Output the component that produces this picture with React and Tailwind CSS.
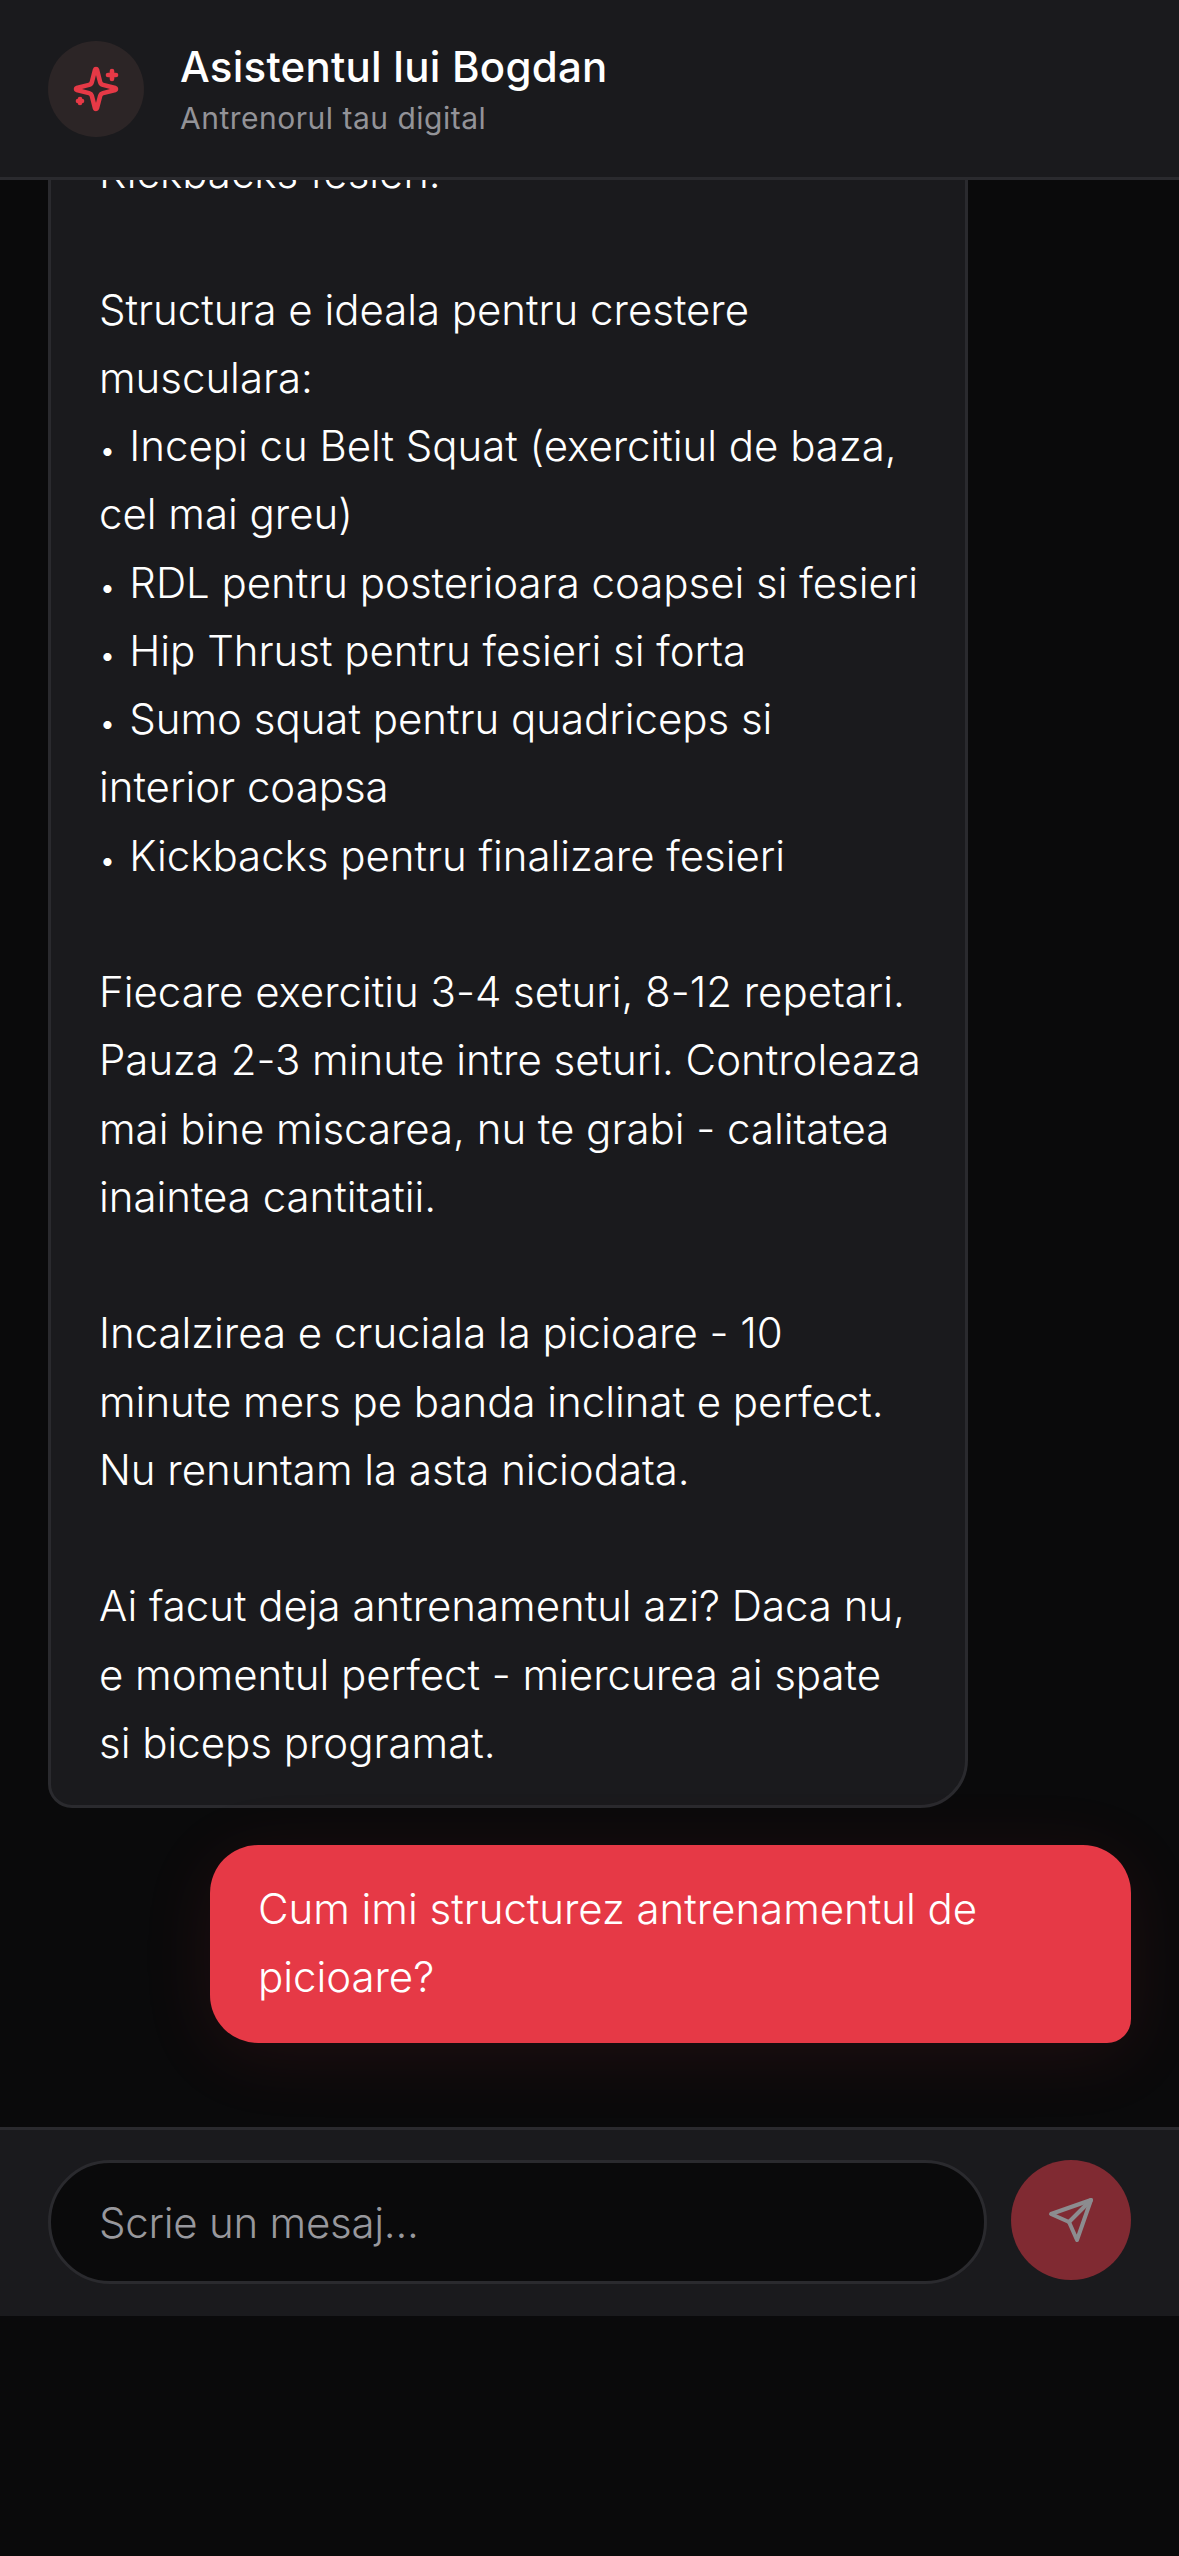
import React from "react";

const Bullet = () => <span className="mr-[5px] text-[30px] leading-none">• </span>;

function SparkleIcon() {
  return (
    <svg width="48" height="48" viewBox="0 0 24 24" fill="none" stroke="#e63946" strokeWidth="2.3" strokeLinecap="round" strokeLinejoin="round">
      <path d="M9.937 15.5A2 2 0 0 0 8.5 14.063l-6.135-1.582a.5.5 0 0 1 0-.962L8.5 9.936A2 2 0 0 0 9.937 8.5l1.582-6.135a.5.5 0 0 1 .963 0L14.063 8.5A2 2 0 0 0 15.5 9.937l6.135 1.581a.5.5 0 0 1 0 .964L15.5 14.063a2 2 0 0 0-1.437 1.437l-1.582 6.135a.5.5 0 0 1-.963 0z" />
      <path d="M20 3v4" />
      <path d="M22 5h-4" />
      <path d="M4 17v2" />
      <path d="M5 18H3" />
    </svg>
  );
}

function SendIcon() {
  return (
    <svg width="48" height="48" viewBox="0 0 24 24" fill="none" stroke="#8c8c8f" strokeWidth="2" strokeLinecap="round" strokeLinejoin="round">
      <path d="m22 2-7 20-4-9-9-4Z" />
      <path d="M22 2 11 13" />
    </svg>
  );
}

export default function App() {
  return (
    <div className="flex h-[2556px] w-[1179px] flex-col overflow-hidden bg-[#0a0a0b] font-['Inter',sans-serif] text-white">
      <header className="z-10 flex h-[180px] shrink-0 items-center gap-[36px] border-b-[3px] border-[#2a2a2e] bg-[#1a1a1d] px-[48px]">
        <div className="flex h-[96px] w-[96px] items-center justify-center rounded-full bg-[#2c2526]">
          <SparkleIcon />
        </div>
        <div className="flex flex-col">
          <div className="mt-[-4px] text-[42px] leading-[63px] font-medium tracking-[0.25px]">Asistentul lui Bogdan</div>
          <div className="text-[30px] leading-[40px] tracking-[0.5px] text-[#939398]">Antrenorul tau digital</div>
        </div>
      </header>

      <main className="flex min-h-0 flex-1 flex-col justify-end gap-[37px] overflow-hidden px-[48px] pb-[84px]">
        <div className="w-[920px] shrink-0 self-start rounded-t-[48px] rounded-br-[48px] rounded-bl-[24px] border-[3px] border-[#2a2a2e] bg-[#1a1a1d] px-[48px] pt-[36px] pb-[28px] text-[42px] leading-[68.25px] font-[350] tracking-[-0.03px] whitespace-pre">
          {"Kickbacks fesieri.\n\nStructura e ideala pentru crestere\nmusculara:\n"}
          <Bullet />{"Incepi cu Belt Squat (exercitiul de baza,\ncel mai greu)\n"}
          <Bullet />{"RDL pentru posterioara coapsei si fesieri\n"}
          <Bullet />{"Hip Thrust pentru fesieri si forta\n"}
          <Bullet />{"Sumo squat pentru quadriceps si\ninterior coapsa\n"}
          <Bullet />{"Kickbacks pentru finalizare fesieri\n\n"}
          {"Fiecare exercitiu 3-4 seturi, 8-12 repetari.\nPauza 2-3 minute intre seturi. Controleaza\nmai bine miscarea, nu te grabi - calitatea\ninaintea cantitatii.\n\n"}
          {"Incalzirea e cruciala la picioare - 10\nminute mers pe banda inclinat e perfect.\nNu renuntam la asta niciodata.\n\n"}
          {"Ai facut deja antrenamentul azi? Daca nu,\ne momentul perfect - miercurea ai spate\nsi biceps programat."}
        </div>
        <div className="w-[921px] shrink-0 self-end rounded-t-[48px] rounded-br-[24px] rounded-bl-[48px] bg-[#e63946] px-[48px] pt-[30px] pb-[31.5px] text-[42px] leading-[68.25px] font-[350] tracking-[-0.04px] shadow-[0_12px_72px_rgba(230,57,70,0.1)]">
          Cum imi structurez antrenamentul de picioare?
        </div>
      </main>

      <footer className="flex h-[189px] shrink-0 items-start gap-[24px] border-t-[3px] border-[#2a2a2e] bg-[#1a1a1d] px-[48px] pt-[30px]">
        <div className="flex h-[124px] flex-1 items-center rounded-full border-[3px] border-[#2a2a2e] bg-[#0a0a0b] px-[48px] text-[42px] font-[350] tracking-[-0.25px] text-[#98989d]">
          Scrie un mesaj...
        </div>
        <div className="flex h-[120px] w-[120px] items-center justify-center rounded-full bg-[#802a32]">
          <SendIcon />
        </div>
      </footer>

      <div className="h-[240px] shrink-0" />
    </div>
  );
}
